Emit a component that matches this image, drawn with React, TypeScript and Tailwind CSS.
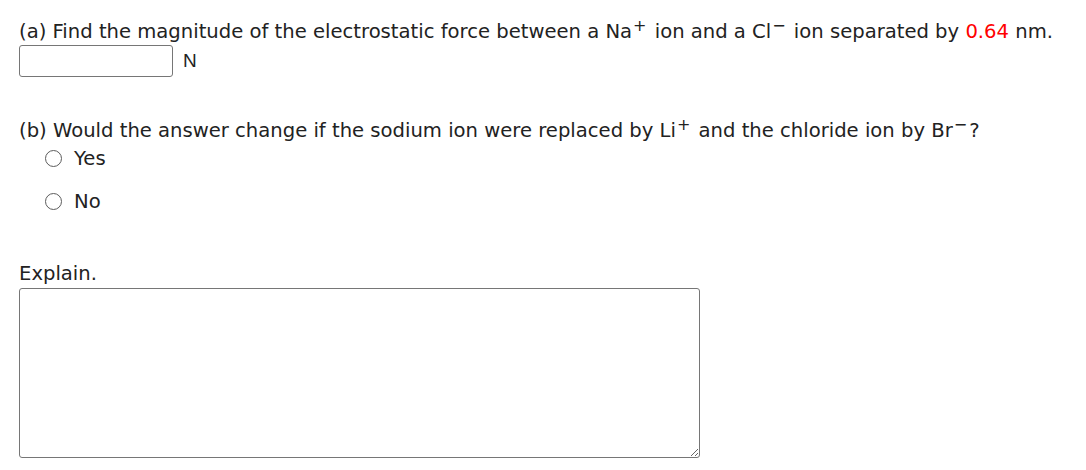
import React from "react";

function Sup({ children }: { children: React.ReactNode }) {
  return <span className="relative -top-[7px] text-[16px] leading-none ml-[1px] mr-[2px]">{children}</span>;
}

function Radio({ label }: { label: string }) {
  return (
    <label className="flex items-center h-[17px] cursor-pointer">
      <span className="ml-[26px] w-[17px] h-[17px] rounded-full border-[1.5px] border-[#5c5c5c] bg-white" />
      <span className="ml-[12px] text-[19.6px] leading-[24px] text-[#222]">{label}</span>
    </label>
  );
}

export default function App() {
  return (
    <div className="bg-white w-[1086px] h-[470px] px-[19px] pt-[20px] text-[#222] font-['Verdana','DejaVu_Sans',sans-serif]">
      {/* part a */}
      <p className="text-[19.6px] leading-[24px] whitespace-nowrap">
        (a) Find the magnitude of the electrostatic force between a Na<Sup>+</Sup> ion and a Cl
        <Sup>&minus;</Sup> ion separated by <span className="text-[#f00]">0.64</span> nm.
      </p>
      <div className="flex items-center mt-[1px] h-[32px]">
        <input
          type="text"
          className="w-[154px] h-[32px] border border-[#767676] rounded-[3px] bg-white outline-none"
        />
        <span className="ml-[10px] text-[19px] font-['Liberation_Sans',Arial,sans-serif]">N</span>
      </div>

      {/* part b */}
      <p className="mt-[42px] text-[19.6px] leading-[24px] whitespace-nowrap">
        (b) Would the answer change if the sodium ion were replaced by Li<Sup>+</Sup> and the chloride ion by Br
        <Sup>&minus;</Sup>?
      </p>
      <div className="mt-[7px] flex flex-col gap-[26px]">
        <Radio label="Yes" />
        <Radio label="No" />
      </div>

      <p className="mt-[52px] text-[19.6px] leading-[24px]">Explain.</p>
      <textarea className="mt-[2px] block w-[681px] h-[170px] border border-[#767676] rounded-[3px] bg-white outline-none" />
    </div>
  );
}
